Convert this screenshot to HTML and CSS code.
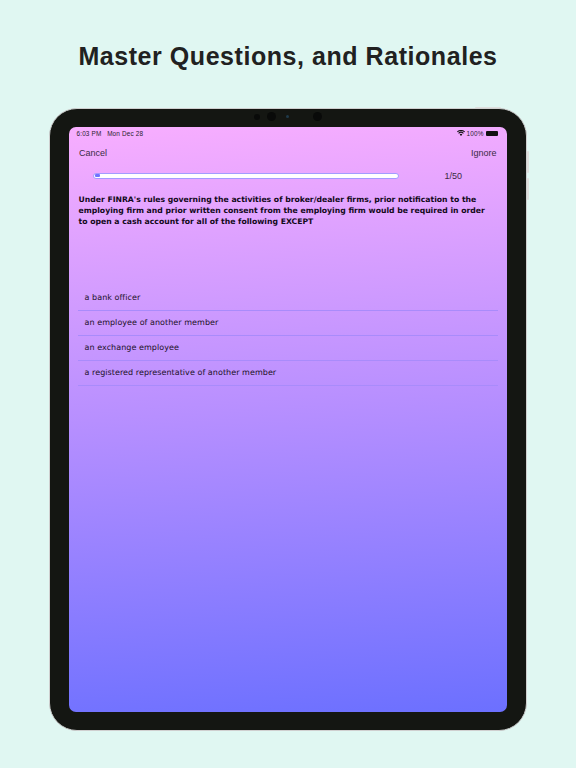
FILE: index.html
```html
<!DOCTYPE html>
<html lang="en">
<head>
<meta charset="utf-8">
<title>Master Questions, and Rationales</title>
<link rel="stylesheet" href="styles.css">
</head>
<body>
<h1 class="headline">Master Questions, and Rationales</h1>
<div class="device">
  <span class="side-btn side-top"></span>
  <span class="side-btn side-vol1"></span>
  <span class="side-btn side-vol2"></span>
  <div class="bezel">
    <div class="sensors">
      <span class="cam cam-a"></span>
      <span class="cam cam-b"></span>
      <span class="cam cam-c"></span>
      <span class="cam cam-d"></span>
    </div>
    <main class="screen">
      <div class="status">
        <span>6:03 PM&nbsp;&nbsp; Mon Dec 28</span>
        <span class="status-right">
          <svg class="wifi" width="8" height="6" viewBox="0 0 16 12"><path fill="#111" d="M8 12 5.4 9.1a3.6 3.6 0 0 1 5.2 0zM3.9 7.5 2.4 5.8a7.9 7.9 0 0 1 11.2 0l-1.5 1.7a5.7 5.7 0 0 0-8.2 0zM1.4 4.7 0 3.1a11.4 11.4 0 0 1 16 0l-1.4 1.6a9.4 9.4 0 0 0-13.2 0z"/></svg>
          <span>100%</span>
          <span class="battery"></span>
        </span>
      </div>
      <div class="nav">
        <span>Cancel</span>
        <span>Ignore</span>
      </div>
      <div class="progress-row">
        <div class="progress"><div class="progress-fill"></div></div>
        <span class="count">1/50</span>
      </div>
      <p class="question">Under FINRA's rules governing the activities of broker/dealer firms, prior notification to the employing firm and prior written consent from the employing firm would be required in order to open a cash account for all of the following EXCEPT</p>
      <ul class="answers">
        <li>a bank officer</li>
        <li>an employee of another member</li>
        <li>an exchange employee</li>
        <li>a registered representative of another member</li>
      </ul>
    </main>
  </div>
</div>
</body>
</html>
```

FILE: styles.css
```css
* { box-sizing: border-box; }
html, body { margin: 0; height: 768px; overflow: hidden; }
body {
  background: #e0f7f2;
  font-family: "Liberation Sans", Arial, sans-serif;
  padding-top: 40px;
}
.headline {
  margin: 0;
  height: 68px;
  text-align: center;
  font-size: 25px;
  line-height: 33px;
  letter-spacing: 0.55px;
  font-weight: 700;
  color: #212121;
}
.device {
  position: relative;
  width: 478px;
  height: 623px;
  margin-left: 49px;
}
.bezel {
  width: 100%;
  height: 100%;
  padding: 17.5px 19px 18px 18.5px;
  background: #141612;
  border: 1.5px solid #cfcfcf;
  border-radius: 28px;
  position: relative;
}
.side-btn { position: absolute; background: #dedfdd; border-radius: 1px; }
.side-top { top: -1px; right: 26px; width: 26px; height: 2px; }
.side-vol1 { top: 43px; right: -2px; width: 2px; height: 22px; }
.side-vol2 { top: 70px; right: -2px; width: 2px; height: 22px; }
.sensors { position: absolute; top: 0; left: 0; width: 100%; height: 17px; }
.cam { position: absolute; border-radius: 50%; background: #090a09; }
.cam-a { left: 204px; top: 5px; width: 6px; height: 6px; }
.cam-b { left: 217px; top: 3px; width: 9px; height: 9px; }
.cam-c { left: 236px; top: 6px; width: 3px; height: 3px; background: #1f3a4a; }
.cam-d { left: 263px; top: 3px; width: 9px; height: 9px; }
.screen {
  width: 100%;
  height: 100%;
  border-radius: 7px;
  background: linear-gradient(176deg, #f8aeff 0%, #b78fff 48%, #6c70ff 100%);
  overflow: hidden;
  color: #1c1424;
  padding: 0 9.5px 0 9px;
}
.status {
  display: flex;
  justify-content: space-between;
  align-items: center;
  height: 12px;
  margin: 0 0 0 -1px;
  padding-top: 1px;
  font-size: 6.4px;
  color: #2a1f2f;
  letter-spacing: 0.15px;
}
.status-right { display: flex; align-items: center; gap: 2px; }
.battery {
  display: block;
  width: 12px;
  height: 5px;
  background: #111;
  border-radius: 1px;
}
.nav {
  display: flex;
  justify-content: space-between;
  margin: 8px 1px 0 1.5px;
  height: 13px;
  font-size: 9px;
  line-height: 13px;
  color: #3b2b45;
}
.progress-row {
  display: flex;
  align-items: center;
  height: 12px;
  margin-top: 10px;
  padding-left: 15.5px;
}
.progress {
  width: 306px;
  height: 6px;
  background: #fff;
  border: 1px solid #a39bff;
  border-radius: 3px;
  padding: 0.5px 1px;
}
.progress-fill { width: 5px; height: 3px; background: #6f72ff; border-radius: 1px; }
.count {
  margin-left: 45.5px;
  font-size: 9px;
  color: #3b2b45;
}
.question {
  margin: 12px 0 0 1px;
  padding-right: 10px;
  height: 92px;
  font-family: "DejaVu Sans", Verdana, sans-serif;
  font-weight: 700;
  font-size: 7.7px;
  line-height: 11px;
  color: #12091a;
  text-rendering: geometricPrecision;
}
.answers {
  list-style: none;
  margin: 0;
  padding: 0;
  font-family: "DejaVu Sans", Verdana, sans-serif;
  font-size: 8px;
  letter-spacing: 0.05px;
  color: #1c1028;
  text-rendering: geometricPrecision;
}
.answers li {
  height: 25px;
  line-height: 24px;
  padding-left: 7px;
  border-bottom: 1px solid #a98bfb;
}
```
